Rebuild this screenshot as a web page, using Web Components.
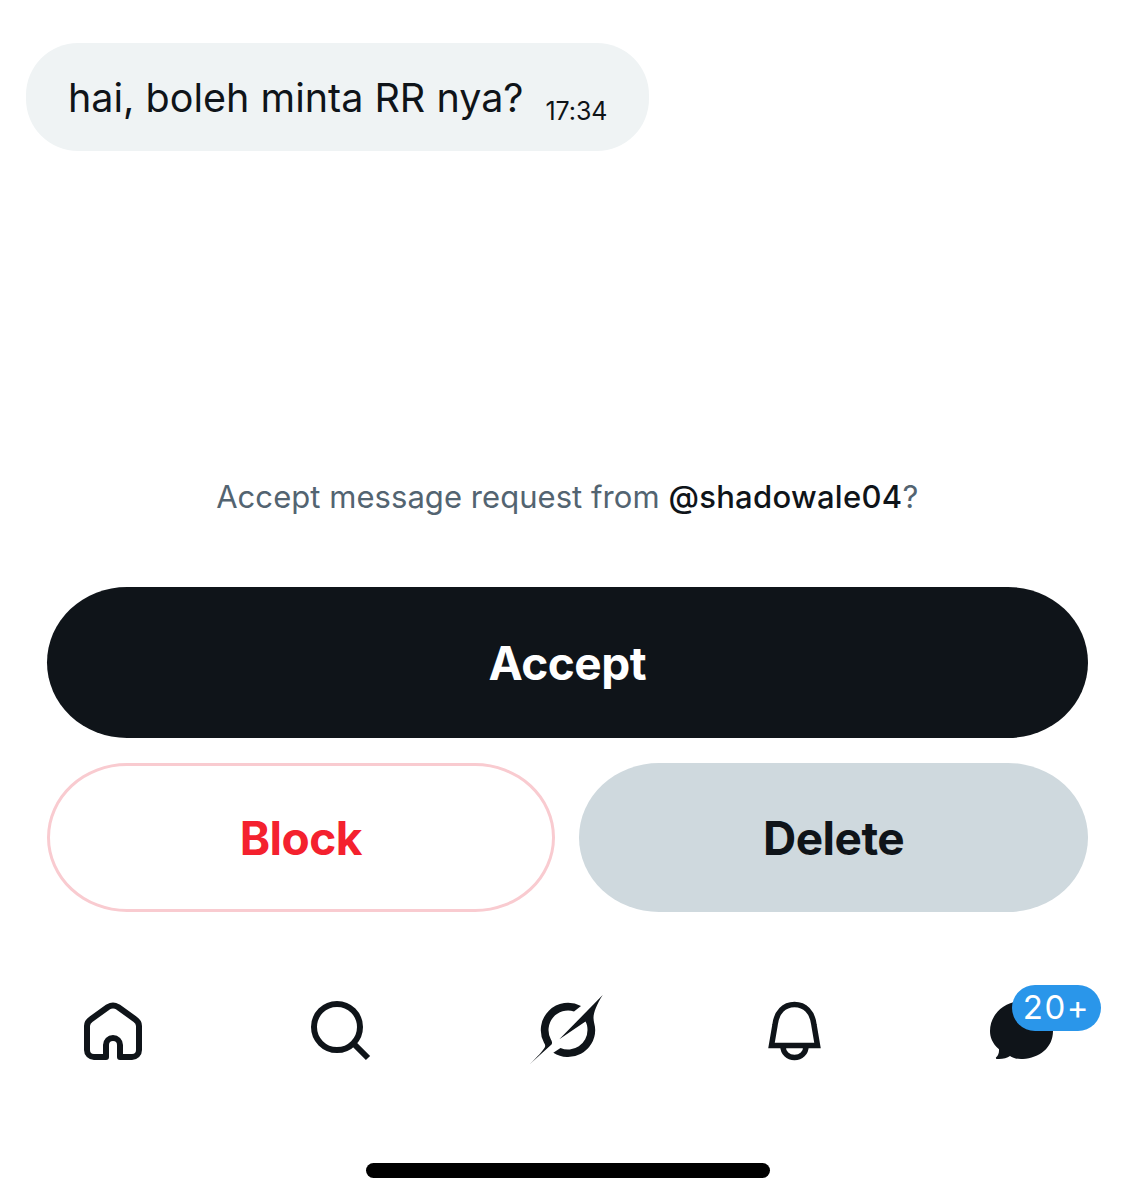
<!DOCTYPE html>
<html><head><meta charset="utf-8">
<style>
html,body{margin:0;padding:0;background:#fff}
body{font-family:Inter,"Liberation Sans",sans-serif;color:#0f1419}
</style></head><body>
<dm-screen>
  <chat-bubble time="17:34">hai, boleh minta RR nya?</chat-bubble>
  <request-panel handle="@shadowale04"></request-panel>
  <tab-bar></tab-bar>
  <home-indicator></home-indicator>
</dm-screen>
<script>
function def(name, html){
  customElements.define(name, class extends HTMLElement{
    constructor(){super();this.attachShadow({mode:'open'});}
    connectedCallback(){this.shadowRoot.innerHTML = typeof html==='function'?html(this):html;}
  });
}
def('dm-screen',`<style>:host{display:flex;flex-direction:column;width:1134px;height:1200px;overflow:hidden;background:#fff}</style><slot></slot>`);
def('chat-bubble',el=>`<style>
:host{display:flex;align-items:flex-end;gap:22px;align-self:flex-start;box-sizing:border-box;height:108px;margin:43px 0 0 26px;width:623px;padding:0 43px 0 42px;background:#eff3f4;border-radius:52px;font:400 39.5px/1 Inter,"Liberation Sans",sans-serif;color:#0f1419;letter-spacing:0}
.m{padding-bottom:33px;white-space:nowrap}
.t{font-size:25px;letter-spacing:-.1px;padding-bottom:27px;white-space:nowrap}
</style><span class="m"><slot></slot></span><span class="t">${el.getAttribute('time')}</span>`);
def('request-panel',el=>`<style>
:host{display:block;padding:0 46px 0 46.5px}
p{margin:327px 0 71px;text-align:center;font:400 31px/38px Inter,"Liberation Sans",sans-serif;color:#536471;letter-spacing:.05px}
b{font-weight:500;color:#0f1419;letter-spacing:.3px}
.row{display:grid;grid-template-columns:1fr 1fr;gap:25px 24px}
.btn{display:flex;align-items:center;justify-content:center;box-sizing:border-box;font:700 46px/1 Inter,"Liberation Sans",sans-serif;letter-spacing:-.5px}
.accept{grid-column:1/3;height:151px;background:#0f1419;color:#fff;border-radius:80px/75.5px}
.block{height:149px;background:#fff;color:#f4212e;border:3px solid #f9cbd0;border-radius:80px/74.5px}
.delete{height:149px;background:#cfd9de;color:#0f1419;border-radius:80px/74.5px}
</style><p>Accept message request from <b>${el.getAttribute('handle')}</b>?</p>
<div class="row"><div class="btn accept">Accept</div><div class="btn block">Block</div><div class="btn delete">Delete</div></div>`);
def('tab-bar',`<style>
:host{display:grid;grid-template-columns:repeat(5,1fr);margin-top:74px;height:90px;align-items:center;justify-items:center}
svg{display:block;overflow:visible}
.explore{margin-bottom:4px}
.w{position:relative;width:66px;height:66px}
.badge{position:absolute;left:24.400px;top:-13px;width:89px;height:46px;border-radius:23px;background:#2a96ea;color:#fff;font:400 33px/44px Inter,"Liberation Sans",sans-serif;text-align:center;letter-spacing:1.5px}
</style>
<svg width="58" height="58" viewBox="0 0 58 58" fill="none" stroke="#0f1419" stroke-width="6" stroke-linejoin="round"><path d="M22 55H10C6 55 3 52 3 48V24C3 21 4.500 19 7 17.300L24 5C27.500 3 30.500 3 34 5L51 17.300C53.500 19 55 21 55 24V48C55 52 52 55 48 55H36V43C36 39 33 36 29 36S22 39 22 43Z"/></svg>
<svg width="60" height="60" viewBox="0 0 60 60" fill="none" stroke="#0f1419" stroke-width="6"><circle cx="27" cy="26" r="23"/><path d="M43.500 42.500L58 57"/></svg>
<svg class="explore" width="84" height="76" viewBox="0 0 84 76" fill="#0f1419"><path d="M56 15.100L49 20.500A19.500 19.500 0 0 0 25.800 48.200C27 50 27.500 52 26.500 53.500L5 73C12 66 18 60 20 56C20.500 54.500 20 53 19 51.800A27.200 27.200 0 0 1 56 15.100Z"/><path d="M77.700 4C72 13 68.500 21 68.500 27C68.500 31 70.200 34 70.200 39A27.200 27.200 0 0 1 28.300 61.800L35.500 57A19.500 19.500 0 0 0 62.500 39C62.500 36 62 33 60.500 30.500L34.300 48.300Z"/></svg>
<svg width="60" height="60" viewBox="0 0 60 60" fill="none" stroke="#0f1419" stroke-width="5.500"><path d="M7.500 44.500L11 24C12.500 11 20 3.500 30.500 3.500S48.500 11 50 24L53.500 44.500Z"/><path d="M19 45C19 52 24 56.500 30.500 56.500S42 52 42 45"/></svg>
<div class="w"><svg width="66" height="66" viewBox="0 0 66 66" fill="#0f1419"><path d="M34 3C51 3 65 16 65 33S51 60 35 61c-6 .3-10-.8-13-3-3 2-8 3.500-13 3-1 0-1.500-1-.8-1.700 2-2 3-4.500 2.800-8C4 45 2 39 2 33 2 16 17 3 34 3z"/></svg><div class="badge">20+</div></div>`);
def('home-indicator',`<style>:host{display:block;width:404px;height:15px;border-radius:8px;background:#000;align-self:center;margin:87px 0 0 2px}</style>`);
</script></body></html>
